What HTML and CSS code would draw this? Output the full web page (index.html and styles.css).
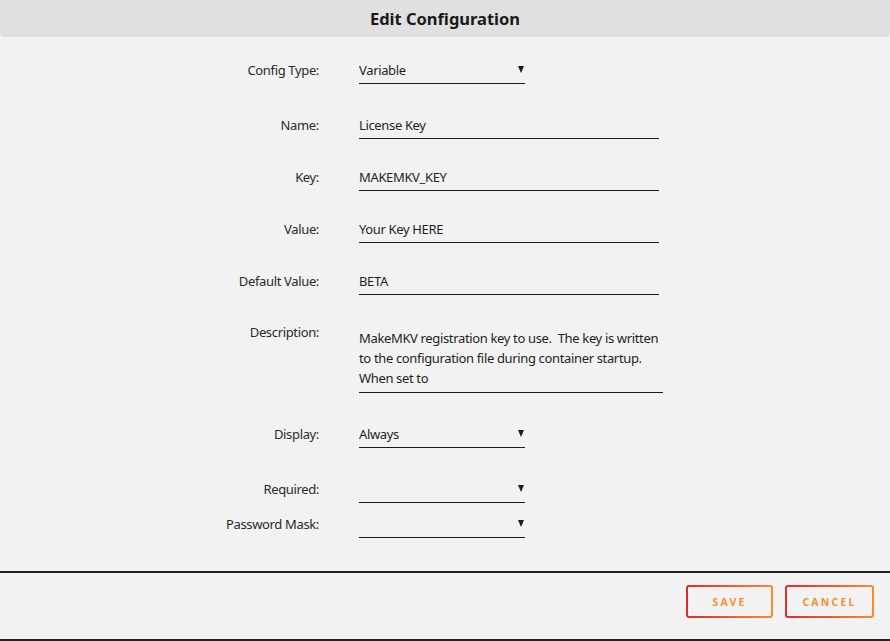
FILE: index.html
```html
<!DOCTYPE html>
<html lang="en">
<head>
<meta charset="UTF-8">
<title>Edit Configuration</title>
<link rel="stylesheet" href="styles.css">
</head>
<body>
  <div class="dialog">
    <div class="title">Edit Configuration</div>

    <div class="form">
      <div class="row first">
        <label class="label">Config Type:</label>
        <div class="field select"><span>Variable</span><span class="arrow"></span></div>
      </div>
      <div class="row gap-lg">
        <label class="label">Name:</label>
        <div class="field text">License Key</div>
      </div>
      <div class="row">
        <label class="label">Key:</label>
        <div class="field text">MAKEMKV_KEY</div>
      </div>
      <div class="row">
        <label class="label">Value:</label>
        <div class="field text">Your Key HERE</div>
      </div>
      <div class="row">
        <label class="label">Default Value:</label>
        <div class="field text">BETA</div>
      </div>
      <div class="row gap-md">
        <label class="label">Description:</label>
        <div class="field area">MakeMKV registration key to use.&nbsp; The key is written<br>to the configuration file during container startup.<br>When set to</div>
      </div>
      <div class="row gap-lg">
        <label class="label">Display:</label>
        <div class="field select"><span>Always</span><span class="arrow"></span></div>
      </div>
      <div class="row gap-lg">
        <label class="label">Required:</label>
        <div class="field select"><span></span><span class="arrow"></span></div>
      </div>
      <div class="row gap-sm">
        <label class="label">Password Mask:</label>
        <div class="field select"><span></span><span class="arrow"></span></div>
      </div>
    </div>

    <div class="footer">
      <button class="button save"><span>SAVE</span></button>
      <button class="button cancel"><span>CANCEL</span></button>
    </div>
  </div>
</body>
</html>
```

FILE: styles.css
```css
body {
  margin: 0;
  background: #f2f2f2;
  font-family: "Noto Sans", "Open Sans", sans-serif;
  color: #1f1f1f;
}

.title {
  height: 37px;
  line-height: 38px;
  background: #e0e0e0;
  border-radius: 0 0 4px 4px;
  text-align: center;
  font-size: 16.5px;
  font-weight: bold;
  color: #1a1a1a;
}

.row {
  display: grid;
  grid-template-columns: 319px 1fr;
  column-gap: 40px;
  align-items: start;
  margin-top: 25px;
  font-size: 13px;
  letter-spacing: -0.35px;
}

.row.first {
  margin-top: 20px;
}

.row.gap-lg {
  margin-top: 28px;
}

.row.gap-md {
  margin-top: 24px;
}

.row.gap-sm {
  margin-top: 8px;
}

.label {
  text-align: right;
  line-height: 26px;
  color: #2a2a2a;
}

.field {
  height: 26px;
  line-height: 26px;
  border-bottom: 1px solid #1c1c1c;
}

.field.text {
  width: 300px;
}

.field.select {
  width: 166px;
  display: flex;
  justify-content: space-between;
  align-items: center;
}

.arrow {
  width: 0;
  height: 0;
  margin-right: 1px;
  margin-top: -1px;
  border-left: 3px solid transparent;
  border-right: 3px solid transparent;
  border-top: 7px solid #1c1c1c;
}

.field.area {
  width: 304px;
  height: auto;
  line-height: 20px;
  padding: 9px 0 4px;
  white-space: nowrap;
}

.footer {
  margin-top: 33px;
  border-top: 2px solid #222;
  border-bottom: 2px solid #222;
  height: 54px;
  display: flex;
  justify-content: flex-end;
  align-items: flex-start;
  gap: 12px;
  padding: 12px 16px 0 0;
}

.button {
  height: 33px;
  padding: 0;
  border: 2px solid transparent;
  border-radius: 3px;
  background: linear-gradient(#f2f2f2, #f2f2f2) padding-box,
              linear-gradient(90deg, #e22a2a, #ff8a2a) border-box;
  font-family: "Noto Sans", sans-serif;
  font-size: 10.5px;
  font-weight: bold;
  letter-spacing: 2.2px;
  cursor: pointer;
}

.button.save {
  width: 87px;
}

.button.cancel {
  width: 89px;
}

.button span {
  color: #f7902e;
}
```
